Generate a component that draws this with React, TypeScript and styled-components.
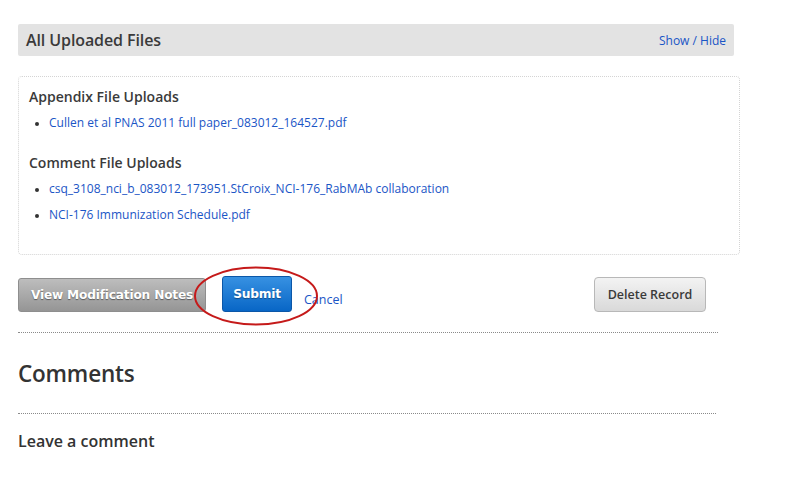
import React from "react";
import styled, { createGlobalStyle } from "styled-components";

const Global = createGlobalStyle`
  html, body { margin: 0; padding: 0; background: #fff; }
  body { font-family: "Open Sans", "Liberation Sans", sans-serif; color: #333; }
`;

const Page = styled.div`
  padding: 24px 0 0 18px;
  width: 722px;
`;

const PanelHeader = styled.div`
  width: 716px;
  height: 32px;
  box-sizing: border-box;
  background: #e3e3e3;
  border-radius: 2px;
  display: flex;
  align-items: center;
  justify-content: space-between;
  padding: 0 8px;
`;

const PanelTitle = styled.h2`
  margin: 0;
  font-size: 16px;
  font-weight: 600;
  color: #3a3a3a;
  letter-spacing: -0.1px;
`;

const Link = styled.a`
  color: #1a55c6;
  text-decoration: none;
  font-size: 12px;
`;

const FilesBox = styled.div`
  margin-top: 20px;
  width: 722px;
  height: 179px;
  box-sizing: border-box;
  border: 1px dotted #d4d4d4;
  border-radius: 4px;
  padding: 10px 10px 0 10px;
`;

const GroupTitle = styled.h3`
  margin: 0 0 4px 0;
  font-size: 14px;
  font-weight: 600;
  color: #3a3a3a;
`;

const FileList = styled.ul`
  margin: 0 0 17px 0;
  padding: 0 0 0 20px;
  list-style: disc;
  font-size: 12px;
  color: #333;
  li { line-height: 26px; }
  li::marker { font-size: 10px; }
`;

const ButtonRow = styled.div`
  margin-top: 21px;
  width: 688px;
  display: flex;
  align-items: center;
`;

const GrayButton = styled.button`
  height: 34px;
  width: 188px;
  border: 1px solid #8e8e8e;
  border-radius: 3px;
  background: linear-gradient(#bdbdbd, #959595);
  color: #fff;
  font-family: "DejaVu Sans", Verdana, sans-serif;
  font-weight: bold;
  font-size: 12.2px;
  letter-spacing: -0.2px;
  text-shadow: 0 1px 1px rgba(0, 0, 0, 0.45);
  padding: 0;
  margin-top: 1px;
`;

const SubmitWrap = styled.div`
  position: relative;
  margin-left: 16px;
  display: flex;
`;

const BlueButton = styled.button`
  height: 36px;
  width: 70px;
  border: 1px solid #0b57a8;
  border-radius: 3px;
  background: linear-gradient(#3791e2, #0866c6);
  color: #fff;
  font-family: "DejaVu Sans", Verdana, sans-serif;
  font-weight: bold;
  font-size: 12.2px;
  letter-spacing: -0.2px;
  text-shadow: 0 1px 1px rgba(0, 0, 0, 0.35);
  padding: 0;
`;

const Ellipse = styled.svg`
  position: absolute;
  left: -28px;
  top: -10px;
  width: 124px;
  height: 60px;
  overflow: visible;
  pointer-events: none;
`;

const CancelLink = styled(Link)`
  margin-left: 12px;
  margin-top: 11px;
  font-size: 12.5px;
`;

const Spacer = styled.div`
  flex: 1;
`;

const LightButton = styled.button`
  height: 35px;
  width: 112px;
  border: 1px solid #b8b8b8;
  border-radius: 4px;
  background: linear-gradient(#f3f3f3, #d9d9d9);
  color: #3a3a3a;
  font-family: "Open Sans", sans-serif;
  font-weight: 600;
  font-size: 12.5px;
  padding: 0;
`;

const Rule = styled.hr<{ $w: number }>`
  margin: 0;
  width: ${(p) => p.$w}px;
  border: 0;
  border-top: 1px dotted #8a8a8a;
  height: 0;
`;

const CommentsTitle = styled.h2`
  margin: 0;
  font-size: 22.5px;
  font-weight: 600;
  color: #333;
  line-height: 30px;
  letter-spacing: -0.2px;
`;

const SubTitle = styled.h3`
  margin: 0;
  font-size: 16px;
  font-weight: 600;
  color: #333;
  line-height: 20px;
`;

const RuleA = styled(Rule)`
  margin-top: 20px;
`;
const CommentsBlock = styled.div`
  padding: 26px 0 24px 0;
`;
const LeaveBlock = styled.div`
  padding-top: 17px;
`;

export default function App() {
  return (
    <>
      <Global />
      <Page>
        <PanelHeader>
          <PanelTitle>All Uploaded Files</PanelTitle>
          <Link href="#">Show / Hide</Link>
        </PanelHeader>
        <FilesBox>
          <GroupTitle>Appendix File Uploads</GroupTitle>
          <FileList>
            <li><Link href="#">Cullen et al PNAS 2011 full paper_083012_164527.pdf</Link></li>
          </FileList>
          <GroupTitle>Comment File Uploads</GroupTitle>
          <FileList>
            <li><Link href="#">csq_3108_nci_b_083012_173951.StCroix_NCI-176_RabMAb collaboration</Link></li>
            <li><Link href="#">NCI-176 Immunization Schedule.pdf</Link></li>
          </FileList>
        </FilesBox>
        <ButtonRow>
          <GrayButton>View Modification Notes</GrayButton>
          <SubmitWrap>
            <BlueButton>Submit</BlueButton>
            <Ellipse viewBox="0 0 124 60">
              <ellipse cx="62" cy="30" rx="61" ry="28.5" fill="none" stroke="#c51a1a" strokeWidth="2" />
            </Ellipse>
          </SubmitWrap>
          <CancelLink href="#">Cancel</CancelLink>
          <Spacer />
          <LightButton>Delete Record</LightButton>
        </ButtonRow>
        <RuleA $w={700} />
        <CommentsBlock>
          <CommentsTitle>Comments</CommentsTitle>
        </CommentsBlock>
        <Rule $w={698} />
        <LeaveBlock>
          <SubTitle>Leave a comment</SubTitle>
        </LeaveBlock>
      </Page>
    </>
  );
}
